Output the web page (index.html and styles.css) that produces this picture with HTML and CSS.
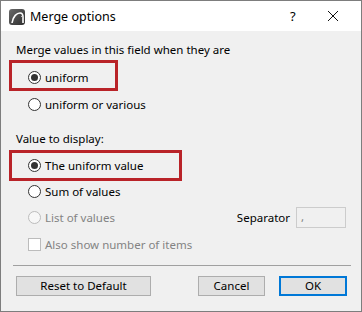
FILE: index.html
```html
<!DOCTYPE html>
<html lang="en">
<head>
  <meta charset="UTF-8">
  <title>Merge options</title>
  <link rel="stylesheet" href="styles.css">
</head>
<body>

<div class="window">
  <div class="titlebar">
    <svg class="app-icon" width="16" height="16" viewBox="0 0 16 16">
      <defs>
        <linearGradient id="ig" x1="0" y1="0" x2="1" y2="1">
          <stop offset="0" stop-color="#6a6a6a"/>
          <stop offset="1" stop-color="#2e2e2e"/>
        </linearGradient>
      </defs>
      <rect x="0" y="0" width="16" height="16" rx="3" fill="url(#ig)"/>
      <path d="M3 14 C4 7 8 4 11 4 C13 4 14 6 14 8 L14 14" fill="none" stroke="#fff" stroke-width="1.6"/>
      <path d="M12 7 L14 8.5" stroke="#ccc" stroke-width="1"/>
    </svg>
    <span class="title">Merge options</span>
    <span class="help">?</span>
    <span class="close">
      <svg width="12" height="12" viewBox="0 0 12 12"><path d="M1 1 L11 11 M11 1 L1 11" stroke="#111" stroke-width="1"/></svg>
    </span>
  </div>

  <div class="content">
    <div class="label first">Merge values in this field when they are</div>

    <div class="highlight hl-merge">
      <div class="option"><span class="radio checked"></span>uniform</div>
    </div>
    <div class="option">
      <span class="radio"></span>uniform or various
    </div>

    <div class="label second">Value to display:</div>

    <div class="highlight hl-value">
      <div class="option"><span class="radio checked"></span>The uniform value</div>
    </div>
    <div class="option after-value">
      <span class="radio"></span>Sum of values
    </div>
    <div class="option list-row">
      <span class="radio disabled"></span><span class="dim">List of values</span>
      <span class="sep-label">Separator</span>
      <span class="sep-input">,</span>
    </div>
    <div class="option">
      <span class="checkbox"></span><span class="dim">Also show number of items</span>
    </div>

    <div class="divider"></div>

    <div class="buttons">
      <button class="btn reset">Reset to Default</button>
      <button class="btn cancel">Cancel</button>
      <button class="btn ok">OK</button>
    </div>
  </div>
</div>

</body>
</html>
```

FILE: styles.css
```css
body {
  margin: 0;
  padding: 0;
  font-family: "Noto Sans", "Liberation Sans", sans-serif;
  font-size: 11.5px;
  color: #000;
}
.window {
  width: 362px;
  height: 312px;
  box-sizing: border-box;
  border: 1px solid #7d7d7d;
  background: #f0f0f0;
  overflow: hidden;
}
.titlebar {
  height: 30px;
  background: #fff;
  display: flex;
  align-items: center;
  padding-left: 8px;
}
.app-icon {
  margin-top: 1px;
}
.title {
  margin-left: 5px;
  font-size: 12.5px;
  flex: 1;
}
.help {
  width: 20px;
  margin-right: 17px;
  font-size: 13px;
}
.close {
  width: 12px;
  margin-right: 22px;
  display: flex;
}
.content {
  padding: 0 10px 0 9px;
}
.label {
  height: 16px;
  line-height: 16px;
  padding-left: 6px;
}
.label.first {
  margin-top: 11px;
}
.label.second {
  margin-top: 14px;
}
.highlight {
  border: 3px solid #b92328;
  box-sizing: border-box;
  height: 31px;
  margin-left: -1px;
  display: flex;
  align-items: center;
}
.hl-merge {
  width: 109px;
  margin-top: 2px;
  padding-top: 4px;
}
.hl-value {
  width: 173px;
  margin-top: 3px;
}
.option {
  height: 26px;
  display: flex;
  align-items: center;
  padding-left: 18px;
}
.option.after-value {
  margin-top: -3px;
}
.highlight .option {
  height: 25px;
  padding-left: 16px;
}
.radio {
  width: 13px;
  height: 13px;
  box-sizing: border-box;
  border: 1px solid #333;
  border-radius: 50%;
  background: #fff;
  margin-right: 4px;
  display: flex;
  align-items: center;
  justify-content: center;
}
.radio.checked::after {
  content: "";
  width: 7px;
  height: 7px;
  border-radius: 50%;
  background: #333;
}
.radio.disabled {
  border-color: #bcbcbc;
  background: #f7f7f7;
}
.checkbox {
  width: 13px;
  height: 13px;
  box-sizing: border-box;
  border: 1px solid #bcbcbc;
  background: #fff;
  margin-right: 4px;
}
.dim {
  color: #838383;
}
.list-row .sep-label {
  margin-left: auto;
  margin-right: 6px;
}
.sep-input {
  width: 50px;
  height: 21px;
  box-sizing: border-box;
  border: 1px solid #cccccc;
  color: #838383;
  padding-left: 4px;
  line-height: 17px;
  margin-right: 5px;
}
.list-row + .option {
  height: 28px;
}
.divider {
  height: 1px;
  background: #a0a0a0;
  margin: 7px 0 0 3px;
}
.buttons {
  display: flex;
  margin-top: 10px;
  padding-left: 6px;
}
.btn {
  font-family: "Noto Sans", "Liberation Sans", sans-serif;
  font-size: 11.5px;
  color: #000;
  height: 20px;
  padding: 0;
  background: #e1e1e1;
  border: 1px solid #adadad;
  box-sizing: border-box;
  line-height: 16px;
}
.reset {
  width: 135px;
}
.cancel {
  width: 67px;
  margin-left: 47px;
}
.ok {
  width: 68px;
  margin-left: 14px;
  border: 2px solid #0078d7;
  line-height: 14px;
}
```
